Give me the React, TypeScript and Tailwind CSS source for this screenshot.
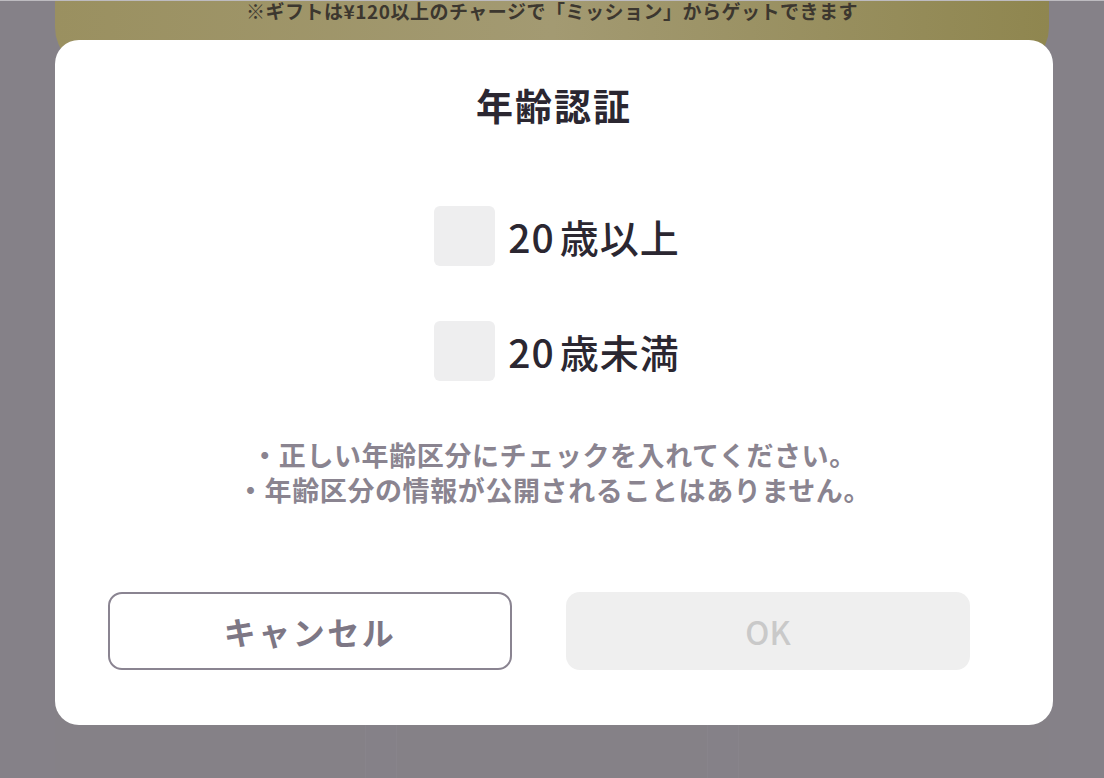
import React from "react";

export default function App() {
  const jp = { fontFamily: '"Noto Sans CJK JP", "Noto Sans", sans-serif' };
  return (
    <div className="relative w-[1104px] h-[778px] overflow-hidden bg-[#858188]" style={jp}>
      <div className="h-[1px] bg-[#bdbbc0]" />
      <div className="mx-[55px] h-[70px] rounded-b-[44px] bg-gradient-to-r from-[#9a9060] via-[#a39a72] to-[#8f864f] flex justify-center">
        <div className="text-[19px] leading-[22px] font-bold text-[#3c372f] -mt-[1px] tracking-[0.5px]">
          ※ギフトは¥120以上のチャージで「ミッション」からゲットできます
        </div>
      </div>
      <div className="mx-[55px] mt-[8px] flex gap-[30px] h-[700px]">
        <div className="flex-1 bg-[#858187] border-r border-[#88848b]" />
        <div className="flex-1 bg-[#858187] border-x border-[#88848b]" />
        <div className="flex-1 bg-[#858187] border-l border-[#88848b]" />
      </div>

      <div className="absolute left-[55px] top-[40px] w-[998px] h-[685px] rounded-[24px] bg-white flex flex-col items-center">
        <div className="mt-[41px] h-[48px] leading-[48px] text-[37px] font-bold text-[#2b2731] tracking-[2px]">
          年齢認証
        </div>
        <div className="mt-[77px] flex flex-col gap-[55px] ml-[6px]">
          {["20歳以上", "20歳未満"].map((t) => (
            <div key={t} className="flex items-center h-[60px]">
              <div className="w-[61px] h-[60px] rounded-[6px] bg-[#eeeeef]" />
              <div className="ml-[13px] text-[39px] leading-[60px] font-medium text-[#2b2731]">
                <span className="tracking-[1px]">20</span>
                <span className="ml-[5px] tracking-[1px]">{t.slice(2)}</span>
              </div>
            </div>
          ))}
        </div>
        <div className="mt-[56px] flex flex-col items-center text-[27px] leading-[35px] font-semibold text-[#8a8490] tracking-[0.6px]">
          <div>・正しい年齢区分にチェックを入れてください。</div>
          <div>・年齢区分の情報が公開されることはありません。</div>
        </div>
        <div className="mt-[85px] self-stretch pl-[53px] flex gap-[54px]">
          <button className="w-[404px] h-[78px] rounded-[14px] border-2 border-[#8a8491] bg-white text-[32px] font-bold text-[#7d7785] tracking-[2.5px]">
            キャンセル
          </button>
          <button className="w-[404px] h-[78px] rounded-[14px] bg-[#efefef] text-[32px] font-medium text-[#c9c9c9]">
            OK
          </button>
        </div>
      </div>
    </div>
  );
}
